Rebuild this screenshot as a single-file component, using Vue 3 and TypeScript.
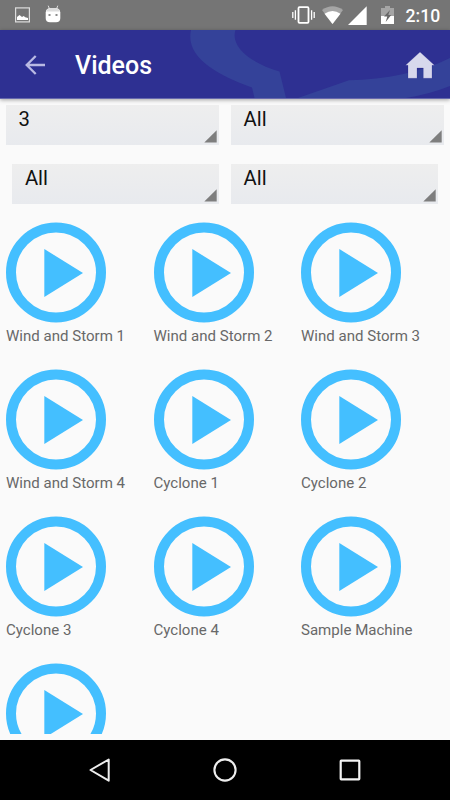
<script setup lang="ts">
const filterRows: string[][] = [
  ['3', 'All'],
  ['All', 'All'],
]

const videos: string[] = [
  'Wind and Storm 1',
  'Wind and Storm 2',
  'Wind and Storm 3',
  'Wind and Storm 4',
  'Cyclone 1',
  'Cyclone 2',
  'Cyclone 3',
  'Cyclone 4',
  'Sample Machine',
  '',
]
</script>

<template>
  <div class="screen">
    <div class="status">
      <svg class="picture" width="15" height="16" viewBox="0 0 15 16">
        <rect x=".6" y=".9" width="13.8" height="14" fill="none" stroke="#ddd" stroke-width="1.2" />
        <path d="M2 13V10L4.500 8l2.500 2 1.700-1 1.500 1.200 2.800.8V13z" fill="#fff" />
      </svg>
      <svg class="robot" width="16" height="18" viewBox="0 0 16 18">
        <path d="M3.200.7l1.200 3M12.800.7l-1.200 3" stroke="#ddd" stroke-width="1" />
        <path d="M.7 7.500Q1.200 3.300 5 3.300h6q3.800 0 4.300 4.200v5.500q0 4.300-4.300 4.300H5Q.7 17.300.7 13z" fill="#fff" />
        <path d="M1.200 6.500Q1.900 3.300 5 3.300h6q3.100 0 3.800 3.200z" fill="#ddd" />
        <path d="M3.500 9h2v2h-2zM10.500 9h2v2h-2z" fill="#8b8b8b" />
      </svg>
      <span class="spacer"></span>
      <svg class="vibrate" width="23" height="18" viewBox="0 0 23 18">
        <rect x="6.500" y="1.200" width="10" height="15.600" rx="1" fill="none" stroke="#fff" stroke-width="1.800" />
        <path d="M.8 6v6M3.400 4.300v9.400M19.600 4.300v9.400M22.200 6v6" stroke="#fff" stroke-width="1.300" />
      </svg>
      <svg class="wifi" width="21" height="18" viewBox="0 0 21 18">
        <path d="M0 4Q10.500-3.500 21 4L10.500 18z" fill="#a5a5a5" />
        <path d="M2.500 7.700Q10.500 2.300 18.500 7.700L10.500 18z" fill="#fff" />
      </svg>
      <svg class="signal" width="19" height="19" viewBox="0 0 19 19">
        <path d="M18.700.3v18.700H0z" fill="#fff" />
      </svg>
      <svg class="battery" width="13" height="18" viewBox="0 0 13 18">
        <path d="M4 0h5v2h4v8H0V2h4z" fill="#a5a5a5" />
        <path d="M0 10h13v8H0z" fill="#fff" />
        <path d="M9 4L3 10.500h3.300L4.700 16 10.200 9H7.300z" fill="#686868" />
      </svg>
      <span class="clock">2:10</span>
    </div>

    <header class="bar">
      <svg class="swirl" width="450" height="68" viewBox="0 0 450 68">
        <path d="M191 0h44.500C230 16 250 33 279.500 41.500L286 68h-31.500L252 57.500C217 45 185 27 191 0zM298 68l51-17.800C385 50 422 42 450 28v28Q430 64 406 68z" fill="#344299" />
      </svg>
      <svg class="back" width="20" height="20" viewBox="0 0 20 20">
        <path d="M20 10H1.700M10.700 1L1.700 10l9 9" fill="none" stroke="#b9b9e3" stroke-width="2.300" />
      </svg>
      <h1>Videos</h1>
      <svg class="home" width="30" height="27" viewBox="0 0 30 27">
        <path d="M15 0l14.500 13.300H27V26.300h-8.700V16h-6.300v10.300H3v-13H.5z" fill="#d7d8ec" stroke="#202087" stroke-opacity=".4" stroke-width=".5" />
      </svg>
    </header>

    <main>
      <div v-for="(row, r) in filterRows" :key="r" class="filters" :class="{ inset: r === 1 }">
        <div v-for="(value, i) in row" :key="i" class="spinner">
          <span>{{ value }}</span>
          <svg width="13" height="13" viewBox="0 0 13 13"><path d="M12.700.2v12.300H.3z" fill="#7e7e7e" /></svg>
        </div>
      </div>

      <div class="grid">
        <div v-for="(title, i) in videos" :key="i" class="video">
          <svg width="100" height="100" viewBox="0 0 100 100">
            <circle cx="50" cy="49.500" r="45" fill="none" stroke="#44bfff" stroke-width="10" />
            <path d="M38.300 26L77 50l-38.700 24z" fill="#44bfff" />
          </svg>
          <span v-if="title">{{ title }}</span>
        </div>
      </div>
    </main>

    <nav>
      <svg width="24" height="26" viewBox="0 0 24 26"><path d="M20.700 2.500v21.200L2.500 13z" fill="none" stroke="#eee" stroke-width="2" stroke-linejoin="round" /></svg>
      <svg width="24" height="24" viewBox="0 0 24 24"><circle cx="12" cy="12" r="10.600" fill="none" stroke="#eee" stroke-width="2.100" /></svg>
      <svg width="24" height="24" viewBox="0 0 24 24"><rect x="2.700" y="2.700" width="18.600" height="18.600" rx=".5" fill="none" stroke="#f2f2f2" stroke-width="2.200" /></svg>
    </nav>
  </div>
</template>

<style>
body {
  margin: 0;
}
</style>

<style scoped>
.screen {
  width: 450px;
  height: 800px;
  display: flex;
  flex-direction: column;
  overflow: hidden;
  background: #fafafa;
  font-family: Roboto, sans-serif;
}
svg {
  display: block;
  flex: none;
}
.status {
  height: 30px;
  flex: none;
  display: flex;
  align-items: center;
  box-sizing: border-box;
  padding: 0 10px 0 15px;
  background: #757575;
}
.robot {
  margin: -3px 0 0 15px;
}
.spacer {
  flex: 1;
}
.wifi {
  margin-left: 7px;
}
.signal {
  margin-left: 5px;
}
.battery {
  margin-left: 14px;
}
.clock {
  width: 34.500px;
  margin: 2px 0 0 11.500px;
  color: #fff;
  font-size: 17.600px;
  font-weight: 500;
  line-height: 28px;
  white-space: nowrap;
}
.bar {
  position: relative;
  z-index: 1;
  height: 69px;
  flex: none;
  display: flex;
  align-items: center;
  box-sizing: border-box;
  padding: 2px 15px 0 25px;
  border-bottom: 1px solid #6668ad;
  background: #2e3092;
  box-shadow: 0 1px 4px rgba(0, 0, 0, 0.35);
}
.swirl {
  position: absolute;
  left: 0;
  top: 0;
}
.back,
.home,
h1 {
  position: relative;
}
h1 {
  flex: 1;
  margin: 2px 0 0 30px;
  color: #fff;
  font-size: 25px;
  font-weight: 500;
  line-height: 32px;
}
main {
  height: 634.5px;
  flex: none;
  box-sizing: border-box;
  padding: 6px 6px 0;
  overflow: hidden;
}
.filters {
  display: flex;
  gap: 12px;
  height: 40px;
  margin-bottom: 19px;
}
.filters.inset {
  padding: 0 6.400px;
}
.spinner {
  flex: 1;
  display: flex;
  justify-content: space-between;
  box-sizing: border-box;
  padding: 0 2px 0 12.500px;
  background: linear-gradient(#eeeeee, #e8eaee);
  color: #111;
  font-size: 20.300px;
  line-height: 29px;
}
.spinner svg {
  align-self: flex-end;
  margin-bottom: 2px;
}
.grid {
  display: grid;
  grid-template-columns: repeat(3, 147.500px);
  grid-auto-rows: 147px;
}
.video svg {
  overflow: visible;
}
.video span {
  display: block;
  margin-top: 2px;
  color: #686868;
  font-size: 15.050px;
  line-height: 22px;
  white-space: nowrap;
}
nav {
  flex: 1;
  margin-top: 6.500px;
  display: flex;
  align-items: center;
  justify-content: space-between;
  padding: 0 88px;
  background: #000;
}
</style>
